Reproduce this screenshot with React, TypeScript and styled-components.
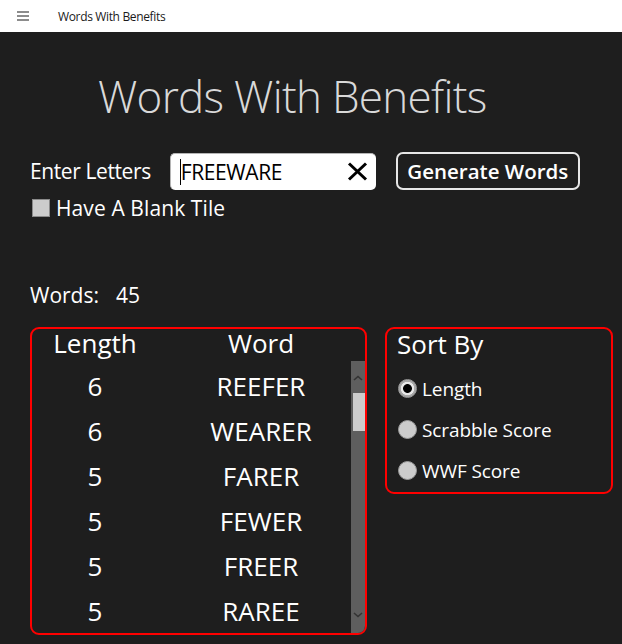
import React from 'react';
import styled, { createGlobalStyle } from 'styled-components';

const GlobalStyle = createGlobalStyle`
    html, body {
        margin: 0;
        padding: 0;
        background: #1e1e1e;
        font-family: "Open Sans", "Noto Sans", sans-serif;
        color: #ffffff;
    }
`;

const Window = styled.div`
    width: 622px;
    height: 644px;
    overflow: hidden;
    background: #1e1e1e;
`;

const TitleBar = styled.div`
    height: 32px;
    background: #ffffff;
    display: flex;
    align-items: center;
    color: #1a1a1a;
    font-size: 12px;
    letter-spacing: -0.35px;
`;

const MenuButton = styled.div`
    width: 58px;
    height: 32px;
    display: flex;
    align-items: center;
    padding-left: 17px;
    box-sizing: border-box;
`;

const Main = styled.div`
    padding: 0 9px 0 30px;
`;

const Heading = styled.h1`
    margin: 36px 0 0 68px;
    font-size: 44px;
    line-height: 56px;
    font-weight: 300;
    letter-spacing: -0.7px;
    color: #d9d9d9;
    white-space: nowrap;
`;

const InputRow = styled.div`
    margin-top: 28px;
    display: flex;
    align-items: center;
    height: 38px;
`;

const Label = styled.span<{ $spacing?: number }>`
    font-size: 21px;
    line-height: 28px;
    letter-spacing: ${p => p.$spacing ?? -0.4}px;
    white-space: nowrap;
`;

const TextBox = styled.div`
    margin-left: 19px;
    width: 206px;
    height: 37px;
    box-sizing: border-box;
    background: #ffffff;
    border-top: 1px solid #b5b5b5;
    border-left: 1px solid #b5b5b5;
    border-radius: 5px;
    display: flex;
    align-items: center;
    padding: 0 8px 0 9px;
    color: #000000;
    font-size: 21px;
    letter-spacing: -0.4px;
`;

const Caret = styled.span`
    width: 1px;
    height: 26px;
    background: #000000;
`;

const TextValue = styled.span`
    flex: 1;
    line-height: 28px;
`;

const ClearIcon = styled.svg`
    width: 21px;
    height: 19px;
    display: block;
`;

const GenerateButton = styled.div`
    margin-left: 20px;
    width: 184px;
    height: 38px;
    box-sizing: border-box;
    border: 2px solid #e6e6e6;
    border-radius: 7px;
    display: flex;
    align-items: center;
    justify-content: center;
    font-size: 20.5px;
    font-weight: 600;
    white-space: nowrap;
`;

const CheckRow = styled.div`
    margin-top: 4px;
    height: 28px;
    display: flex;
    align-items: center;
    gap: 6px;
`;

const CheckBox = styled.div`
    width: 18px;
    height: 18px;
    margin-left: 2px;
    box-sizing: border-box;
    background: #cccccc;
    border: 1px solid #8a8a8a;
`;

const CountRow = styled.div`
    margin-top: 59px;
    height: 28px;
    display: flex;
    align-items: center;
    font-size: 21px;
`;

const CountValue = styled.span`
    margin-left: 17px;
`;

const Panels = styled.div`
    margin-top: 18px;
    display: flex;
    align-items: flex-start;
    gap: 18px;
`;

const Panel = styled.div<{ $w: number; $h: number }>`
    flex-shrink: 0;
    width: ${p => p.$w}px;
    height: ${p => p.$h}px;
    box-sizing: border-box;
    border: 2px solid #ff0000;
    border-radius: 9px;
    position: relative;
`;

const GridRow = styled.div<{ $h: number }>`
    display: grid;
    grid-template-columns: 126px 206px;
    height: ${p => p.$h}px;
    align-items: center;
    font-size: 26px;
    line-height: 34px;
    text-align: center;
    white-space: nowrap;
`;

const HeaderRow = styled(GridRow)`
    align-items: start;
    line-height: 28px;
`;

const List = styled.div`
    height: 272px;
    padding-top: 4px;
    box-sizing: border-box;
    overflow: hidden;
    border-bottom-left-radius: 7px;
`;

const ScrollBar = styled.div`
    position: absolute;
    right: 0;
    top: 32px;
    bottom: 0;
    width: 14px;
    background: #5e5e5e;
    border-bottom-right-radius: 7px;
    display: flex;
    flex-direction: column;
    align-items: center;
`;

const ScrollArrow = styled.svg`
    width: 10px;
    height: 6px;
    display: block;
`;

const Thumb = styled.div`
    width: 12px;
    height: 38px;
    margin: 12px 0 0 1px;
    background: #cccccc;
`;

const Spacer = styled.div`
    flex: 1;
`;

const SortTitle = styled.div`
    padding: 0 0 0 10px;
    height: 30px;
    display: flex;
    align-items: center;
    font-size: 26px;
    line-height: 34px;
    white-space: nowrap;
`;

const RadioList = styled.div`
    margin-top: 9px;
    display: flex;
    flex-direction: column;
`;

const RadioRow = styled.div`
    height: 41px;
    display: flex;
    align-items: center;
    padding-left: 11px;
    gap: 5px;
    font-size: 19px;
    letter-spacing: -0.1px;
    white-space: nowrap;
`;

const RadioDot = styled.div<{ $checked?: boolean }>`
    width: 19px;
    height: 19px;
    border-radius: 50%;
    box-sizing: border-box;
    border: 1px solid #9a9a9a;
    background: ${p => p.$checked
        ? 'radial-gradient(circle, #000 0 4px, #e8e8e8 4.8px 6.4px, #a8a8a8 7px)'
        : '#cccccc'};
`;

const words: [number, string][] = [
    [6, 'REEFER'],
    [6, 'WEARER'],
    [5, 'FARER'],
    [5, 'FEWER'],
    [5, 'FREER'],
    [5, 'RAREE'],
];

function App() {
    return (
        <Window>
            <GlobalStyle />
            <TitleBar>
                <MenuButton>
                    <svg width="12" height="10" viewBox="0 0 12 10">
                        <rect x="0" y="0.5" width="12" height="1" fill="#1a1a1a" />
                        <rect x="0" y="4.5" width="12" height="1" fill="#1a1a1a" />
                        <rect x="0" y="8.5" width="12" height="1" fill="#1a1a1a" />
                    </svg>
                </MenuButton>
                Words With Benefits
            </TitleBar>
            <Main>
                <Heading>Words With Benefits</Heading>
                <InputRow>
                    <Label>Enter Letters</Label>
                    <TextBox>
                        <Caret />
                        <TextValue>FREEWARE</TextValue>
                        <ClearIcon viewBox="0 0 21 19">
                            <path d="M2 1.5 L19 17.5 M19 1.5 L2 17.5" stroke="#000" strokeWidth="3" />
                        </ClearIcon>
                    </TextBox>
                    <GenerateButton>Generate Words</GenerateButton>
                </InputRow>
                <CheckRow>
                    <CheckBox />
                    <Label $spacing={0.1}>Have A Blank Tile</Label>
                </CheckRow>
                <CountRow>
                    <span>Words:</span>
                    <CountValue>45</CountValue>
                </CountRow>
                <Panels>
                    <Panel $w={337} $h={308}>
                        <HeaderRow $h={30}>
                            <span>Length</span>
                            <span>Word</span>
                        </HeaderRow>
                        <List>
                            {words.map(([len, w]) => (
                                <GridRow $h={45} key={w}>
                                    <span>{len}</span>
                                    <span>{w}</span>
                                </GridRow>
                            ))}
                        </List>
                        <ScrollBar>
                            <ScrollArrow viewBox="0 0 10 6" style={{ marginTop: 14 }}>
                                <path d="M1 5 L5 1.5 L9 5" stroke="#333" strokeWidth="1.6" fill="none" />
                            </ScrollArrow>
                            <Thumb />
                            <Spacer />
                            <ScrollArrow viewBox="0 0 10 6" style={{ marginBottom: 15 }}>
                                <path d="M1 1 L5 4.5 L9 1" stroke="#333" strokeWidth="1.6" fill="none" />
                            </ScrollArrow>
                        </ScrollBar>
                    </Panel>
                    <Panel $w={228} $h={167}>
                        <SortTitle>Sort By</SortTitle>
                        <RadioList>
                            <RadioRow><RadioDot $checked />Length</RadioRow>
                            <RadioRow><RadioDot />Scrabble Score</RadioRow>
                            <RadioRow><RadioDot />WWF Score</RadioRow>
                        </RadioList>
                    </Panel>
                </Panels>
            </Main>
        </Window>
    );
}

export default App;
